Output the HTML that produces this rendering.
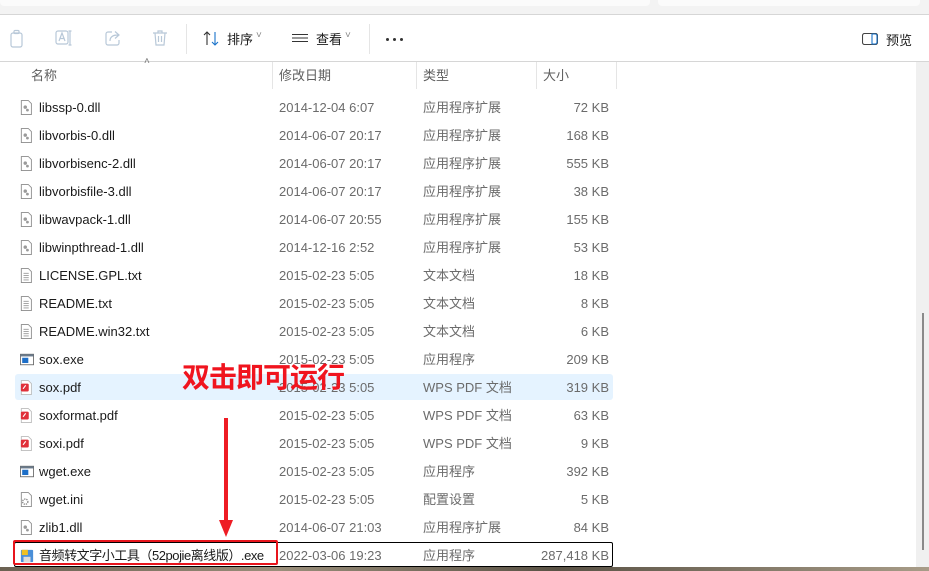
<!DOCTYPE html><html><head><meta charset="utf-8"><style>
*{margin:0;padding:0;box-sizing:border-box}
body{width:929px;height:571px;overflow:hidden;background:#fff;font-family:"Liberation Sans","Noto Sans CJK SC",sans-serif;font-size:13px;position:relative;color:#1a1a1a}
.abs{position:absolute}
.top{left:0;top:0;width:929px;height:15px;background:#f3f3f3;border-bottom:1px solid #d6d6d6}
.tb{left:0;top:15px;width:929px;height:47px;background:#fff;border-bottom:1px solid #d6d6d6}
.row{position:absolute;left:0;width:916px;height:28px;line-height:28px}
.row span{position:absolute;top:0;white-space:nowrap}
.n{left:39px;color:#1a1a1a}
.d{left:279px;color:#6b6b6b}
.t{left:423px;color:#6b6b6b}
.s{right:307px;color:#6b6b6b}
.ic{position:absolute;left:20px;top:5px;width:14px;height:17px}
.hd{position:absolute;top:62px;height:27px;line-height:27px;color:#5f5f5f}
.sep{position:absolute;top:62px;width:1px;height:27px;background:#e5e5e5}
.dot{position:absolute;top:38px;width:3px;height:3px;border-radius:50%;background:#333}
</style></head><body>
<div class="abs top"></div>
<div class="abs" style="left:0;top:0;width:650px;height:6px;background:#fbfbfb;border-radius:0 0 4px 4px"></div>
<div class="abs" style="left:658px;top:0;width:262px;height:6px;background:#fbfbfb;border-radius:0 0 4px 4px"></div>
<div class="abs tb"></div>
<svg class="abs" style="left:8px;top:29px" width="18" height="20" viewBox="0 0 18 20" fill="none" stroke="#b8c8d8" stroke-width="1.2"><rect x="3" y="4" width="11" height="14" rx="2"/><rect x="6" y="1.5" width="5" height="3" rx="1"/></svg>
<svg class="abs" style="left:55px;top:29px" width="18" height="18" viewBox="0 0 18 18" fill="none" stroke="#b8c8d8" stroke-width="1.2"><rect x="1" y="2" width="12" height="13" rx="2"/><path d="M4 12l3-8 3 8M5 9.5h4M15 2v14M13.5 2h3M13.5 16h3"/></svg>
<svg class="abs" style="left:104px;top:29px" width="18" height="18" viewBox="0 0 18 18" fill="none" stroke="#b8c8d8" stroke-width="1.2"><path d="M8 3H4a2 2 0 0 0-2 2v9a2 2 0 0 0 2 2h9a2 2 0 0 0 2-2v-3"/><path d="M6 12c0-5 4-6 8-6M11 2.5l4 3.5-4 3.5"/></svg>
<svg class="abs" style="left:152px;top:29px" width="16" height="18" viewBox="0 0 16 18" fill="none" stroke="#b8c8d8" stroke-width="1.2"><path d="M1 4h14M6 4V2h4v2M3 4l1 12h8l1-12M6.5 7v6M9.5 7v6"/></svg>
<div class="abs" style="left:186px;top:24px;width:1px;height:30px;background:#e5e5e5"></div>
<svg class="abs" style="left:203px;top:31px" width="18" height="15" viewBox="0 0 18 15" fill="none" stroke="#333" stroke-width="1.1"><path d="M4 14V1M1 4l3-3 3 3"/><path d="M12 1v13M9 11l3 3 3-3" stroke="#1a73c9"/></svg>
<div class="abs" style="left:227px;top:29px;color:#1a1a1a">排序</div>
<div class="abs" style="left:256px;top:30px;color:#888;font-size:10px">˅</div>
<svg class="abs" style="left:292px;top:33px" width="16" height="12" viewBox="0 0 16 12" stroke="#333" stroke-width="1"><path d="M0 1.5h16M0 5h16M0 8.5h16"/></svg>
<div class="abs" style="left:316px;top:29px;color:#1a1a1a">查看</div>
<div class="abs" style="left:345px;top:30px;color:#888;font-size:10px">˅</div>
<div class="abs" style="left:369px;top:24px;width:1px;height:30px;background:#e5e5e5"></div>
<div class="dot" style="left:386px"></div><div class="dot" style="left:393px"></div><div class="dot" style="left:400px"></div>
<svg class="abs" style="left:862px;top:33px" width="16" height="12" viewBox="0 0 16 12" fill="none" stroke-width="1.1"><rect x=".5" y=".5" width="15" height="11" rx="2" stroke="#444"/><path d="M10 .5v11" stroke="#1a73c9"/><path d="M10.5 1h3a2 2 0 0 1 1.5 1.5v7a2 2 0 0 1-1.5 1.5h-3" stroke="#1a73c9"/></svg>
<div class="abs" style="left:886px;top:30px;color:#1a1a1a">预览</div>
<div class="abs" style="left:144px;top:56px;color:#777;font-size:10px">˄</div>
<div class="hd" style="left:31px">名称</div>
<div class="hd" style="left:279px">修改日期</div>
<div class="hd" style="left:423px">类型</div>
<div class="hd" style="left:543px">大小</div>
<div class="sep" style="left:272px"></div><div class="sep" style="left:416px"></div><div class="sep" style="left:536px"></div><div class="sep" style="left:616px"></div>
<div class="abs" style="left:916px;top:62px;width:13px;height:505px;background:#f0f0f0"></div>
<div class="abs" style="left:922px;top:313px;width:2px;height:237px;background:#8a8a8a"></div>
<div class="abs" style="left:15px;top:374px;width:598px;height:26px;background:#e5f3ff;border-radius:3px"></div>
<div id="rows"></div>
<svg width="0" height="0" style="position:absolute"><defs>
<g id="dll"><path d="M1.5 .5h8l3.5 3.5v12.5h-11.5z" fill="#fff" stroke="#8a8a8a"/><circle cx="6" cy="8" r="2" fill="#9a9a9a"/><circle cx="8.5" cy="11.5" r="1.6" fill="#9a9a9a"/></g>
<g id="txt"><path d="M1.5 .5h8l3.5 3.5v12.5h-11.5z" fill="#fff" stroke="#8a8a8a"/><path d="M4 6h6M4 8.5h6M4 11h6M4 13.5h6" stroke="#999"/></g>
<g id="exe"><rect x=".5" y="2.5" width="15" height="12" fill="#fff" stroke="#6a6a6a"/><rect x=".5" y="2.5" width="15" height="2.5" fill="#6a7a8a"/><rect x="2.5" y="6.5" width="7" height="6" fill="#1e6fc8"/></g>
<g id="pdf"><path d="M1.5 .5h8l3.5 3.5v12.5h-11.5z" fill="#fff" stroke="#bbb"/><rect x="1" y="4" width="9" height="9" rx="1.5" fill="#e0303a"/><path d="M3.5 10l3-4" stroke="#fff" stroke-width="1.3"/></g>
<g id="ini"><path d="M1.5 .5h8l3.5 3.5v12.5h-11.5z" fill="#fff" stroke="#8a8a8a"/><circle cx="6" cy="11" r="3" fill="none" stroke="#888" stroke-width="1.5" stroke-dasharray="1.5 1"/></g>
<g id="app"><rect x="1" y="2" width="14" height="14" rx="1" fill="#4a8fd8"/><rect x="4" y="10" width="8" height="6" fill="#ddd"/><path d="M2 2h7v6H2z" fill="#f0c020"/></g>
</defs></svg>
<script>
var R=[["dll","libssp-0.dll","2014-12-04 6:07","应用程序扩展","72 KB"],["dll","libvorbis-0.dll","2014-06-07 20:17","应用程序扩展","168 KB"],["dll","libvorbisenc-2.dll","2014-06-07 20:17","应用程序扩展","555 KB"],["dll","libvorbisfile-3.dll","2014-06-07 20:17","应用程序扩展","38 KB"],["dll","libwavpack-1.dll","2014-06-07 20:55","应用程序扩展","155 KB"],["dll","libwinpthread-1.dll","2014-12-16 2:52","应用程序扩展","53 KB"],["txt","LICENSE.GPL.txt","2015-02-23 5:05","文本文档","18 KB"],["txt","README.txt","2015-02-23 5:05","文本文档","8 KB"],["txt","README.win32.txt","2015-02-23 5:05","文本文档","6 KB"],["exe","sox.exe","2015-02-23 5:05","应用程序","209 KB"],["pdf","sox.pdf","2015-02-23 5:05","WPS PDF 文档","319 KB"],["pdf","soxformat.pdf","2015-02-23 5:05","WPS PDF 文档","63 KB"],["pdf","soxi.pdf","2015-02-23 5:05","WPS PDF 文档","9 KB"],["exe","wget.exe","2015-02-23 5:05","应用程序","392 KB"],["ini","wget.ini","2015-02-23 5:05","配置设置","5 KB"],["dll","zlib1.dll","2014-06-07 21:03","应用程序扩展","84 KB"],["app","音频转文字小工具（52pojie离线版）.exe","2022-03-06 19:23","应用程序","287,418 KB"]];
var h="";R.forEach(function(r,i){var t=94+28*i;var ls=i==16?' style="letter-spacing:-0.45px"':'';h+='<div class="row" style="top:'+t+'px"><svg class="ic" viewBox="0 0 16 17"><use href="#'+r[0]+'"/></svg><span class="n"'+ls+'>'+r[1]+'</span><span class="d">'+r[2]+'</span><span class="t">'+r[3]+'</span><span class="s">'+r[4]+'</span></div>';});
document.getElementById("rows").innerHTML=h;
</script>
<div class="abs" style="left:14px;top:542px;width:599px;height:25px;border:1px solid #000;border-radius:2px"></div>
<div class="abs" style="left:13px;top:540px;width:265px;height:25px;border:2px solid #e8141c;border-radius:2px"></div>
<div class="abs" style="left:182px;top:358px;font-size:28px;font-weight:bold;color:#f0141e;font-family:'Noto Sans CJK SC',sans-serif;line-height:36px;letter-spacing:-1px">双击即可运行</div>
<svg class="abs" style="left:216px;top:416px" width="20" height="124" viewBox="0 0 20 124"><path d="M10 2v104" stroke="#ee1c24" stroke-width="4"/><path d="M3 104h14l-7 17z" fill="#ee1c24"/></svg>
<div class="abs" style="left:0;top:567px;width:929px;height:4px;background:linear-gradient(90deg,#6b6152,#9a8e7a 30%,#5a5245 60%,#a89c88)"></div>
</body></html>
